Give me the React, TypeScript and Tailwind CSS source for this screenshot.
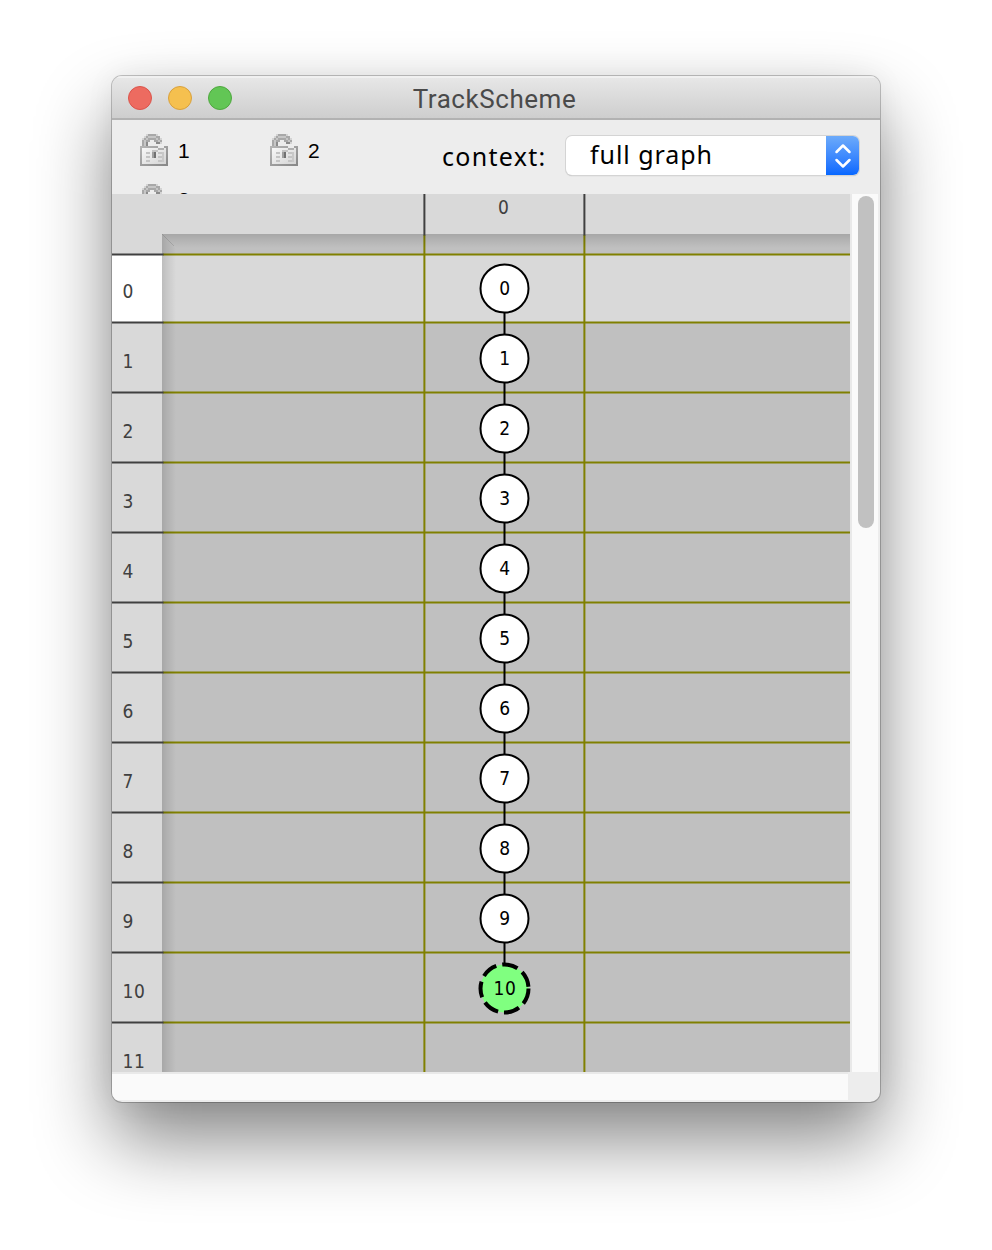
import React from "react";

const rows = [0, 1, 2, 3, 4, 5, 6, 7, 8, 9, 10, 11];
const lineYs = [60.4, 128.4, 198.4, 268.4, 338.4, 408.4, 478.4, 548.4, 618.4, 688.4, 758.4, 828.4];

function LockIcon() {
  return (
    <svg width="28" height="32" viewBox="0 0 28 32" className="block shrink-0">
      <defs>
        <linearGradient id="lockBody" x1="0" y1="0" x2="1" y2="1">
          <stop offset="0" stopColor="#fafafa" />
          <stop offset="1" stopColor="#d2d2d2" />
        </linearGradient>
        <linearGradient id="lockEdge" x1="0" y1="0" x2="1" y2="1">
          <stop offset="0" stopColor="#b4b4b4" />
          <stop offset="1" stopColor="#888888" />
        </linearGradient>
      </defs>
      <g shapeRendering="crispEdges">
        <path d="M2 14V6H4V2H8V0H16V2H20V4H22V10H16V8H14V6H10V8H8V14Z" fill="#a8a8a8" />
        <path d="M4 12V6H6V4H8V2H16V4H18V6H20V8H18V6H16V4H8V6H6V12Z" fill="#c6c6c6" />
        <path d="M16 8H20V10H16ZM6 8H8V14H6Z" fill="#8b8b8b" />
        <path d="M2 4H4V6H2ZM4 2H6V4H4ZM6 0H8V2H6ZM16 0H18V2H16ZM20 4H22V6H20ZM20 8H22V10H20Z" fill="#d4d4d4" />
        <rect x="1" y="13" width="26" height="18" fill="url(#lockBody)" stroke="url(#lockEdge)" strokeWidth="2" />
        <path d="M18 12H24V14H18Z" fill="#ececec" />
        <path d="M18 14H24V16H18Z" fill="#b0b0b0" />
        <path d="M6 18H10V20H6ZM6 22H10V24H6ZM6 26H10V28H6ZM18 18H22V20H18ZM18 22H22V24H18ZM18 26H22V28H18ZM12 16H18V18H12Z" fill="#c4c4c4" />
        <path d="M12 18H16V24H12Z" fill="#a0a0a0" />
        <path d="M14 18H16V24H14Z" fill="#717171" />
        <path d="M22 18H24V28H22Z" fill="#c8c8c8" />
      </g>
    </svg>
  );
}

function LockItem({ label }: { label: string }) {
  return (
    <div className="flex h-[50px] w-[130px] items-start last:h-[49px]">
      <LockIcon />
      <span className="ml-[10px] mt-[4px] font-['Liberation_Sans',sans-serif] text-[21px] leading-[26px] text-black in-[:last-child]:mt-[4px]">{label}</span>
    </div>
  );
}

function TrackGraph() {
  return (
    <svg width="738" height="878" viewBox="0 0 738 878" className="block shrink-0">
      <defs>
        <linearGradient id="topShade" x1="0" y1="0" x2="0" y2="1">
          <stop offset="0" stopColor="#000" stopOpacity=".13" />
          <stop offset=".35" stopColor="#000" stopOpacity=".08" />
          <stop offset="1" stopColor="#000" stopOpacity="0" />
        </linearGradient>
        <linearGradient id="leftShade" x1="0" y1="0" x2="1" y2="0">
          <stop offset="0" stopColor="#000" stopOpacity=".13" />
          <stop offset=".35" stopColor="#000" stopOpacity=".08" />
          <stop offset="1" stopColor="#000" stopOpacity="0" />
        </linearGradient>
      </defs>
      <rect width="738" height="878" fill="#d9d9d9" />
      <rect x="50" y="40" width="688" height="838" fill="#c0c0c0" />
      <rect x="50" y="60" width="688" height="68" fill="#d9d9d9" />
      <rect y="60" width="50" height="68" fill="#fff" />
      {lineYs.map((y) => (
        <line key={y} x1="51" x2="738" y1={y} y2={y} stroke="#808000" strokeWidth="2" />
      ))}
      <path d="M312.4 41V878M472.4 41V878" stroke="#808000" strokeWidth="2" />
      <path d="M50 40H738V54H64Z" fill="url(#topShade)" />
      <path d="M50 40L64 54V878H50Z" fill="url(#leftShade)" />
      <path d="M50 40L62 52" stroke="#000" strokeOpacity=".12" />
      {lineYs.map((y) => (
        <line key={y} x1="0" x2="51.5" y1={y} y2={y} stroke="#404040" strokeWidth="2" />
      ))}
      <path d="M312.4 0V41.5M472.4 0V41.5" stroke="#404040" strokeWidth="2" />
      <path d="M392.5 94V794" stroke="#000" strokeWidth="2" />
      <g fontFamily="'DejaVu Sans Condensed', 'DejaVu Sans', sans-serif" fontStretch="condensed" fontSize="19" letterSpacing=".6">
        <g fill="#404040">
          <text x="391.8" y="20" textAnchor="middle">0</text>
          {rows.map((n) => (
            <text key={n} x="10.5" y={104 + n * 70}>{n}</text>
          ))}
        </g>
        {rows.slice(0, 11).map((n) => (
          <g key={n}>
            <circle
              cx="392.5"
              cy={94.5 + n * 70}
              r="24"
              fill={n === 10 ? "#80ff80" : "#fff"}
              stroke="#000"
              strokeWidth={n === 10 ? 4 : 2}
              strokeDasharray={n === 10 ? "16 6" : undefined}
            />
            <text x="393" y={101 + n * 70} textAnchor="middle">{n}</text>
          </g>
        ))}
      </g>
    </svg>
  );
}

export default function App() {
  return (
    <main className="h-[1250px] w-[992px] overflow-hidden bg-white pl-[112px] pt-[76px]">
      <section className="flex h-[1026px] w-[768px] flex-col overflow-hidden rounded-[10px] bg-[#ededed] shadow-[0_0_0_1px_rgba(0,0,0,0.22),0_38px_76px_rgba(0,0,0,0.48),0_0_30px_rgba(0,0,0,0.06)]">
        <header className="grid h-[44px] shrink-0 grid-cols-[1fr_auto_1fr] items-center border-b-2 border-[#b2b2b2] bg-linear-to-b from-[#e8e8e8] to-[#cecece] shadow-[inset_0_2px_0_#f0f0f0]">
          <div className="flex gap-4 pl-4 pt-[2px]">
            <span className="size-6 rounded-full border border-[#da544b] bg-[#ed6b60]" />
            <span className="size-6 rounded-full border border-[#d8a03d] bg-[#f5c04f]" />
            <span className="size-6 rounded-full border border-[#4fa73f] bg-[#62c655]" />
          </div>
          <h1 className="pr-[3px] pt-[3px] font-[Roboto,sans-serif] text-[26px] leading-[30px] tracking-[0.55px] text-[#4a4a4a]">TrackScheme</h1>
        </header>
        <div className="flex h-[74px] shrink-0 overflow-hidden">
          <div className="flex w-[330px] flex-wrap content-start pl-[28px] pt-[14px]">
            <LockItem label="1" />
            <LockItem label="2" />
            <div className="flex h-[50px] w-[130px] items-start">
              <LockIcon />
              <span className="ml-[10px] mt-[3px] font-['Liberation_Sans',sans-serif] text-[21px] leading-[26px] text-black">3</span>
            </div>
          </div>
          <div className="flex h-[74px] items-start">
            <span className="mt-[19px] w-[124px] whitespace-nowrap font-['Noto_Sans',sans-serif] text-[25px] leading-[34px] tracking-[1.3px] text-black">context:</span>
            <div className="mt-[16px] flex h-[39px] w-[293px] overflow-hidden rounded-[6px] bg-white shadow-[0_0_0_1px_#d4d4d4,0_1px_1px_#aaaaaa]">
              <span className="flex-1 whitespace-nowrap pl-[24px] pt-[1px] font-['Noto_Sans',sans-serif] text-[25px] leading-[34px] tracking-[0.95px] text-black">full graph</span>
              <span className="flex w-[33px] items-center justify-center bg-linear-to-b from-[#6caafa] to-[#0567ff]">
                <svg width="18" height="26" viewBox="0 0 18 26" fill="none" stroke="#fff" strokeWidth="2.5" strokeLinecap="round" strokeLinejoin="round">
                  <path d="M2.5 9L9 2.5L15.5 9M2.5 17L9 23.5L15.5 17" />
                </svg>
              </span>
            </div>
          </div>
        </div>
        <div className="flex h-[878px] shrink-0">
          <TrackGraph />
          <div className="w-[28px] border-l-2 border-[#e9e9e9] bg-[#fafafa] pl-[6px] pt-[2px]">
            <div className="h-[332px] w-4 rounded-full bg-[#c1c1c1]" />
          </div>
        </div>
        <div className="h-[28px] w-[736px] shrink-0 border-t-2 border-[#e9e9e9] bg-[#fafafa]" />
      </section>
    </main>
  );
}
